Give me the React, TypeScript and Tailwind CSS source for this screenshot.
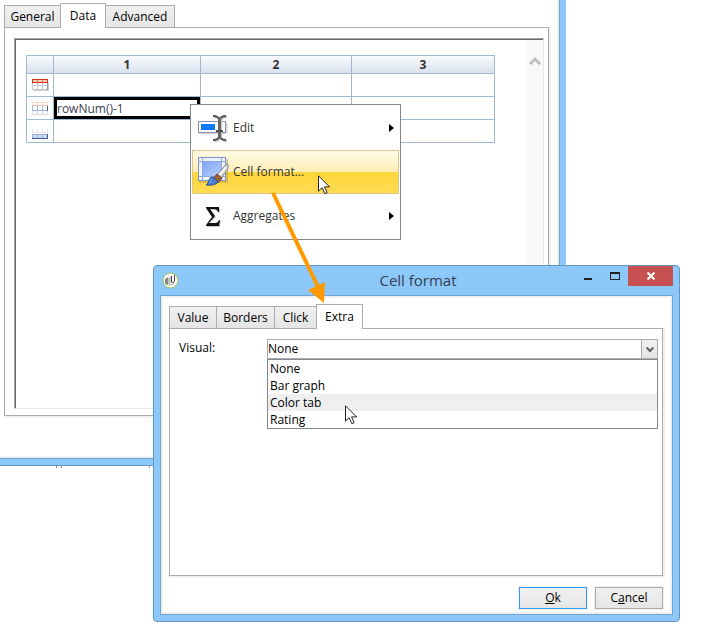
import { useState } from 'react'
import type { ReactNode } from 'react'

type Tab = { name: string; width: string }

const MAIN_TABS: Tab[] = [
    { name: 'General', width: 'w-[57px]' },
    { name: 'Data', width: 'w-[46px]' },
    { name: 'Advanced', width: 'w-[70px]' },
]
const DIALOG_TABS: Tab[] = [
    { name: 'Value', width: 'w-[48px]' },
    { name: 'Borders', width: 'w-[59px]' },
    { name: 'Click', width: 'w-[43px]' },
    { name: 'Extra', width: 'w-[47px]' },
]
const VISUALS = ['None', 'Bar graph', 'Color tab', 'Rating']

type RowKind = 'header' | 'detail' | 'footer'

const ROWS: { kind: RowKind; label: string }[] = [
    { kind: 'header', label: 'Header row' },
    { kind: 'detail', label: 'Detail row' },
    { kind: 'footer', label: 'Footer row' },
]

function RowIcon({ kind }: { kind: RowKind }) {
    return (
        <svg width="17" height="15" viewBox="0 0 17 15" className="mx-auto block">
            {kind === 'header' && (
                <>
                    <path d="M1 12h15v1H1zM16 4h1v9h-1z" fill="#cfcfcf" />
                    <path d="M.5 5v6.5h15V5M5.5 5v7M10.5 5v7M.5 7.5h15" fill="none" stroke="#c3c9d3" />
                    <path d="M15.5 5v7" stroke="#8f9bb3" />
                    <rect x=".5" y="1.5" width="15" height="3" fill="#f6cdbd" stroke="#cf3510" />
                    <path d="M5.500 2v2M10.500 2v2" stroke="#e07a58" />
                </>
            )}
            {kind === 'detail' && (
                <>
                    <path d="M.5 4V1.500h15V4M5.500 2v2M10.500 2v2" fill="none" stroke="#f8d5c9" />
                    <path d="M0 4.500h16" stroke="#e8c4bd" />
                    <path d="M.5 5v4.500h15M5.500 5v4M10.500 5v4" fill="none" stroke="#9fb2d2" />
                    <path d="M15.500 5v5" stroke="#3c5d98" />
                    <path d="M.5 10v3.500h15V10M5.500 10v3M10.500 10v3" fill="none" stroke="#d3dae7" />
                </>
            )}
            {kind === 'footer' && (
                <>
                    <path d="M.5 5v4M5.500 5v4M10.500 5v4M15.500 5v4M0 8.500h16" fill="none" stroke="#e4e8ef" />
                    <rect x=".5" y="10.500" width="15" height="4" fill="#c9d9f2" stroke="#9fb2d2" />
                    <path d="M5.500 10v4M10.500 10v4" stroke="#a9bbd9" />
                    <path d="M0 14.500h16M15.500 10v5" stroke="#3c5d98" />
                </>
            )}
        </svg>
    )
}

function EditIcon() {
    return (
        <svg width="32" height="32" viewBox="0 0 32 32">
            <path d="M2 21h26.500M29.500 11v10" stroke="#d4d4d4" strokeWidth="2" />
            <rect x="1.500" y="9.500" width="27" height="11" fill="#fff" stroke="#8f8faf" />
            <rect x="4" y="12" width="14" height="6" fill="#0a78ff" />
            <path d="M17 5q6 0 7 4q1-4 6-4M24 9v17M17 29q6 0 7-4q1 4 6 4" fill="none" stroke="#c4c4c4" strokeWidth="2" />
            <path d="M16 4q5.500 0 6.500 4q1-4 6.500-4M22.500 8v17M16 28q5.500 0 6.500-4q1 4 6.500 4" fill="none" stroke="#505050" strokeWidth="2" />
            <path d="M22.500 6v20" stroke="#666" strokeWidth="3" />
            <path d="M19 19h7" stroke="#505050" strokeWidth="2" />
        </svg>
    )
}

function FormatIcon() {
    return (
        <svg width="32" height="32" viewBox="0 0 32 32">
            <defs>
                <linearGradient id="sheet" x1="0" y1="0" x2="1" y2="1">
                    <stop offset="0" stopColor="#82a6f0" />
                    <stop offset="1" stopColor="#b5cdfc" />
                </linearGradient>
            </defs>
            <path d="M2 26h28V3" fill="none" stroke="#a08a48" strokeWidth="2" opacity=".4" />
            <rect x="1.500" y="1.500" width="27" height="23" fill="#eef4ff" stroke="#7d95cf" />
            <rect x="6" y="6" width="18" height="14" fill="url(#sheet)" />
            <path d="M5.500 1v24M24.500 1v24M1 5.500h28M1 20.500h28" stroke="#8da6e0" />
            <path d="M31 8q-2-1-5 4l-7 8 4 4q5-7 8-11z" fill="#d2d2d2" stroke="#8a8a8a" />
            <path d="M29 11l-8 10" stroke="#fff" strokeWidth="2" />
            <path d="M20 18l5 4-4 5-5-4z" fill="#9c6238" stroke="#6e4428" />
            <path d="M16 21l5 5q-3 4-12 3q3-2 3-5q1-3 4-3z" fill="#4a80d0" stroke="#2a5391" />
            <path d="M15 23q-2 1-2 4" fill="none" stroke="#8fb6ee" />
        </svg>
    )
}

function SigmaIcon() {
    return (
        <svg width="32" height="32" viewBox="0 0 32 32">
            <path d="M10 8h13v5h-1q-1-3-4-3h-5l6 7-7 7h6q4 0 5-3h1l-1 6H10v-1l7-9-7-8z" fill="#c6c6c6" />
            <path d="M9 7h13v5h-1q-1-3-4-3h-4l5 7-6 7h6q3 0 4-3h1l-1 6H9v-1l6-8-6-9z" fill="#111" />
        </svg>
    )
}

function AppLogo() {
    return (
        <svg width="17" height="17" viewBox="0 0 17 17">
            <circle cx="8.500" cy="8.500" r="7.500" fill="#fff" stroke="#9fc55a" />
            <path d="M3 7l3-2v8l-3-1z" fill="#858a83" />
            <path d="M6 6l3-2v6l-2 3H6z" fill="#c0c4bd" />
            <path d="M9.500 4v6M12.500 3v6q0 2-3 1.500" fill="none" stroke="#4f544e" />
            <path d="M7 13q4 0 5-2" fill="none" stroke="#a0a49d" />
        </svg>
    )
}

function Cursor({ className }: { className: string }) {
    return (
        <svg width="13" height="20" viewBox="0 0 13 20" className={`pointer-events-none absolute ${className}`}>
            <path d="M.5.8v15.400l3.600-3.500 2.700 6 2.400-1-2.700-5.800h5.100z" fill="#fff" stroke="#222" />
        </svg>
    )
}

function TabBar({ tabs, active, onSelect }: { tabs: Tab[]; active: string; onSelect: (t: string) => void }) {
    return (
        <div role="tablist" className="flex h-6 items-end">
            {tabs.map(({ name, width }, i) => (
                <button
                    key={name}
                    role="tab"
                    aria-selected={name === active}
                    onClick={() => onSelect(name)}
                    className={`border border-b-0 border-[#acacac] leading-4 whitespace-nowrap ${width} ${i > 0 ? '-ml-px' : ''} ${name === active
                        ? 'relative z-10 -mb-px h-[25px] bg-white'
                        : 'h-[22px] bg-linear-to-b from-[#f0f0f0] to-[#e5e5e5]'
                        }`}
                >
                    {name}
                </button>
            ))}
        </div>
    )
}

function MainWindow() {
    const [tab, setTab] = useState('Data')
    const [formula, setFormula] = useState('rowNum()-1')

    return (
        <section className="flex h-[466px] w-[566px] flex-col border-b border-[#6496c3] bg-[#8cc8fa] pr-[6px] pb-[6px]">
            <div className="flex flex-1 flex-col border-r border-b border-[#6fa3d1] bg-white">
                <div className="flex flex-1 flex-col border-r-2 border-b-2 border-[#f0f0f0] pt-[3px] pr-2 pb-10 pl-1">
                    <TabBar tabs={MAIN_TABS} active={tab} onSelect={setTab} />
                    <div className="flex flex-1 border border-[#acacac] pt-[10px] pr-[4px] pb-[6px] pl-[9px] shadow-[1px_1px_0_1px_#f0f0f0]">
                        <div className="flex flex-1 border border-t-[#a0a0a0] border-r-[#e8e8e8] border-b-[#e8e8e8] border-l-[#a0a0a0]">
                            <div className="flex flex-1 justify-between border-t border-l border-[#696969]">
                                <table className="mt-[15px] ml-[10px] h-[88px] w-[469px] table-fixed border-separate border-spacing-0 border-t border-l border-[#a0b8d0]">
                                    <colgroup>
                                        <col className="w-[27px]" />
                                        <col className="w-[147px]" />
                                        <col className="w-[151px]" />
                                        <col className="w-[143px]" />
                                    </colgroup>
                                    <thead>
                                        <tr className="h-[18px] bg-linear-to-b from-[#fafcfe] to-[#d6dfec]">
                                            <td className="border-r border-b border-[#a0b8d0] p-0" />
                                            {[1, 2, 3].map((n) => (
                                                <th key={n} scope="col" className="border-r border-b border-[#a0b8d0] p-0 leading-4 font-bold text-[#333]">
                                                    {n}
                                                </th>
                                            ))}
                                        </tr>
                                    </thead>
                                    <tbody>
                                        {ROWS.map(({ kind, label }) => (
                                            <tr key={kind} className="h-[23px]">
                                                <th scope="row" aria-label={label} className="border-r border-b border-[#a0b8d0] p-0">
                                                    <RowIcon kind={kind} />
                                                </th>
                                                <td className="border-r border-b border-[#a0b8d0] p-0">
                                                    {kind === 'detail' && (
                                                        <input
                                                            aria-label="Cell formula"
                                                            value={formula}
                                                            onChange={(e) => setFormula(e.target.value)}
                                                            className="block h-[22px] w-full border-[3px] border-black bg-white leading-4 text-[#3c3c50] outline-none"
                                                        />
                                                    )}
                                                </td>
                                                <td className="border-r border-b border-[#a0b8d0] p-0" />
                                                <td className="border-r border-b border-[#a0b8d0] p-0" />
                                            </tr>
                                        ))}
                                    </tbody>
                                </table>
                                <div className="flex w-[17px] justify-center bg-[#f8f8f8] pt-4">
                                    <svg width="12" height="12" viewBox="0 0 12 12">
                                        <path d="M1 8l5-5 5 5" fill="none" stroke="#bdbdbd" strokeWidth="3" />
                                    </svg>
                                </div>
                            </div>
                        </div>
                    </div>
                </div>
            </div>
        </section>
    )
}

function MenuItem({ icon, label, submenu, active }: { icon: ReactNode; label: string; submenu?: boolean; active?: boolean }) {
    return (
        <button
            role="menuitem"
            className={`flex h-11 w-full items-center gap-1 border px-1 text-left text-[#333] ${active
                ? 'border-[#dcc88a] bg-[linear-gradient(#fffae6,#ffeeb4_50%,#ffd53a_50%,#ffdb52)]'
                : 'border-transparent'
                }`}
        >
            {icon}
            <span className="flex-1">{label}</span>
            {submenu && (
                <svg width="5" height="8" viewBox="0 0 5 8">
                    <path d="M0 0l5 4-5 4z" fill="#000" />
                </svg>
            )}
        </button>
    )
}

function ContextMenu() {
    return (
        <div role="menu" className="absolute top-[104px] left-[190px] w-[211px] border border-[#868686] bg-white p-px">
            <MenuItem icon={<EditIcon />} label="Edit" submenu />
            <MenuItem icon={<FormatIcon />} label="Cell format..." active />
            <MenuItem icon={<SigmaIcon />} label="Aggregates" submenu />
        </div>
    )
}

function CellFormatDialog() {
    const [tab, setTab] = useState('Extra')
    const [visual, setVisual] = useState('None')

    return (
        <section
            role="dialog"
            aria-labelledby="dialog-title"
            className="absolute top-[265px] left-[153px] flex h-[357px] w-[527px] flex-col rounded-[4px] border border-[#6496c3] bg-[#8cc8fa] px-[6px] pb-[6px]"
        >
            <header className="flex h-[29px] items-start">
                <span className="mt-[6px] ml-[2px]"><AppLogo /></span>
                <h1 id="dialog-title" className="flex-1 pl-[82px] text-center text-[15px] leading-[29px] text-[#33414f]">Cell format</h1>
                <button aria-label="Minimize" className="flex h-5 w-[26px] items-center justify-center">
                    <svg width="8" height="12" viewBox="0 0 8 12"><path d="M0 8h8v2H0z" fill="#222" /></svg>
                </button>
                <button aria-label="Maximize" className="flex h-5 w-[27px] items-center justify-center">
                    <svg width="10" height="8" viewBox="0 0 10 8"><path d="M0 0h10v8H0zM1 2v5h8V2z" fill="#222" fillRule="evenodd" /></svg>
                </button>
                <button aria-label="Close" className="flex h-5 w-[45px] items-center justify-center bg-[#c75050]">
                    <svg width="8" height="8" viewBox="0 0 8 8"><path d="M.5.5l7 7M7.500.5l-7 7" stroke="#fff" strokeWidth="2" /></svg>
                </button>
            </header>

            <div className="flex flex-1 flex-col border border-[#6fa3d1]">
                <div className="flex flex-1 flex-col border-2 border-[#f0f0f0] bg-white pt-[6px] pr-[7px] pb-[3px] pl-[6px]">
                    <TabBar tabs={DIALOG_TABS} active={tab} onSelect={setTab} />
                    <div className="flex flex-1 items-start border border-[#acacac] py-[10px] pr-[4px] pl-[9px] shadow-[1px_1px_0_1px_#f0f0f0]">
                        <label htmlFor="visual" className="w-[88px] leading-[18px]">Visual:</label>
                        <div className="relative flex-1">
                            <select
                                id="visual"
                                value={visual}
                                onChange={(e) => setVisual(e.target.value)}
                                className="block h-5 w-full appearance-none border border-[#acacac] bg-white leading-4 outline-none"
                            >
                                {VISUALS.map((v) => <option key={v}>{v}</option>)}
                            </select>
                            <span className="pointer-events-none absolute top-px right-px flex h-[18px] w-4 items-center justify-center border-l border-[#acacac] bg-linear-to-b from-[#f0f0f0] to-[#e5e5e5]">
                                <svg width="8" height="7" viewBox="0 0 8 7"><path d="M.7 1.500L4 5l3.300-3.500" fill="none" stroke="#606060" strokeWidth="2" /></svg>
                            </span>
                            <ul role="listbox" aria-label="Visual" className="absolute top-5 left-0 w-full border border-[#828790] bg-white">
                                {VISUALS.map((v) => (
                                    <li
                                        key={v}
                                        role="option"
                                        aria-selected={v === visual}
                                        onClick={() => setVisual(v)}
                                        className={`px-[2px] leading-[17px] ${v === 'Color tab' ? 'bg-[#efefef]' : ''}`}
                                    >
                                        {v}
                                    </li>
                                ))}
                            </ul>
                        </div>
                    </div>
                    <footer className="mt-[11px] flex justify-end gap-2">
                        <button className="h-[22px] w-[68px] border border-[#3399ff] bg-linear-to-b from-[#f0f0f0] to-[#e5e5e5] leading-4 shadow-[0_0_0_1px_#f0f0f0]">
                            <u>O</u>k
                        </button>
                        <button className="h-[22px] w-[68px] border border-[#acacac] bg-linear-to-b from-[#f0f0f0] to-[#e5e5e5] leading-4 shadow-[0_0_0_1px_#f0f0f0]">
                            C<u>a</u>ncel
                        </button>
                    </footer>
                </div>
            </div>
        </section>
    )
}

export default function App() {
    return (
        <main className="relative min-h-screen overflow-hidden bg-white font-['Open_Sans','Noto_Sans',sans-serif] text-[12px] text-black">
            <MainWindow />
            {/* sliver of whatever lies behind the main window */}
            <div className="flex h-[2px]">
                <span className="ml-[56px] w-px bg-[#808080]" />
                <span className="ml-[4px] w-px bg-[#a0a0a0]" />
                <span className="ml-[87px] w-px bg-[#a0a0a0]" />
            </div>
            <ContextMenu />
            <CellFormatDialog />

            {/* callout from the menu entry to the Extra tab */}
            <svg width="60" height="114" viewBox="0 0 60 114" className="pointer-events-none absolute top-[190px] left-[270px]">
                <path d="M3 3l46 96" stroke="#ff9900" strokeWidth="4" />
                <path d="M54 113L38 100l17-8z" fill="#ff9900" />
            </svg>
            <Cursor className="top-[175px] left-[318px]" />
            <Cursor className="top-[405px] left-[345px]" />
        </main>
    )
}
